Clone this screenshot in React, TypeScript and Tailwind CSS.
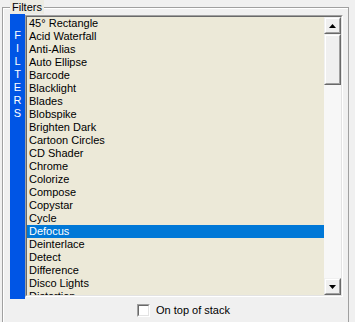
import React from 'react';

const filters = [
  '45° Rectangle',
  'Acid Waterfall',
  'Anti-Alias',
  'Auto Ellipse',
  'Barcode',
  'Blacklight',
  'Blades',
  'Blobspike',
  'Brighten Dark',
  'Cartoon Circles',
  'CD Shader',
  'Chrome',
  'Colorize',
  'Compose',
  'Copystar',
  'Cycle',
  'Defocus',
  'Deinterlace',
  'Detect',
  'Difference',
  'Disco Lights',
  'Distortion',
];

const selected = 'Defocus';

// raised 3d button like the classic windows scrollbar
function ScrollButton({ dir }: { dir: 'up' | 'down' }) {
  return (
    <div className="h-[17px] w-[17px] border-t border-l border-[#f0f0f0] border-r border-b border-r-[#696969] border-b-[#696969] bg-[#f0f0f0]">
      <div className="flex h-full w-full items-center justify-center border-t border-l border-white border-r border-b border-r-[#a0a0a0] border-b-[#a0a0a0]">
        <svg width="7" height="4" viewBox="0 0 7 4">
          {dir === 'up' ? (
            <polygon points="3.5,0 7,4 0,4" fill="#000" />
          ) : (
            <polygon points="0,0 7,0 3.5,4" fill="#000" />
          )}
        </svg>
      </div>
    </div>
  );
}

export default function App() {
  return (
    <div
      className="relative h-[322px] w-[355px] overflow-hidden bg-[#f0f0f0] text-[11px] text-black"
      style={{ fontFamily: '"Liberation Sans", Arial, sans-serif' }}
    >
      {/* group box */}
      <div className="ml-[2px] mt-[7px] h-[330px] w-[347px] border-t border-l border-r border-[#a0a0a0]">
        <div className="h-full w-full border-t border-l border-white">
          <div className="flex items-start pl-[6px] pt-[4px]">
            {/* blue side label */}
            <div className="flex h-[286px] w-[15px] flex-col items-center bg-[#0055e5] pt-[16px] text-white">
              {'FILTERS'.split('').map((c, i) => (
                <span key={i} className="block h-[13px] leading-[13px]">
                  {c}
                </span>
              ))}
            </div>

            {/* list box */}
            <div className="mt-[2px] h-[282px] w-[318px] border-t border-l border-[#a0a0a0] border-r border-b border-r-white border-b-white">
              <div className="flex h-full w-full border-t border-l border-[#696969] border-r border-b border-r-[#e3e3e3] border-b-[#e3e3e3]">
                <div className="h-full flex-1 overflow-hidden bg-[#ece9d8]">
                  {filters.map((f) => (
                    <div
                      key={f}
                      className={
                        f === selected
                          ? 'h-[13px] bg-[#0078d7] pl-[2px] leading-[13px] text-white'
                          : 'h-[13px] pl-[2px] leading-[13px]'
                      }
                    >
                      {f}
                    </div>
                  ))}
                </div>
                {/* scrollbar */}
                <div className="flex h-full w-[17px] flex-col bg-[#f7f7f7]">
                  <ScrollButton dir="up" />
                  <div className="h-[51px] w-[17px] border-t border-l border-[#f0f0f0] border-r border-b border-r-[#696969] border-b-[#696969] bg-[#f0f0f0]">
                    <div className="h-full w-full border-t border-l border-white border-r border-b border-r-[#a0a0a0] border-b-[#a0a0a0]" />
                  </div>
                  <div className="flex-1" />
                  <ScrollButton dir="down" />
                </div>
              </div>
            </div>
          </div>

          {/* checkbox */}
          <div className="ml-[133px] mt-[5px] flex items-center gap-[6px]">
            <div className="h-[13px] w-[13px] border-t border-l border-[#a0a0a0] border-r border-b border-r-white border-b-white">
              <div className="h-full w-full border-t border-l border-[#696969] border-r border-b border-r-[#e3e3e3] border-b-[#e3e3e3] bg-white" />
            </div>
            <span className="leading-[13px]">On top of stack</span>
          </div>
        </div>
      </div>

      {/* group caption over the frame */}
      <div className="absolute left-[10px] top-0 bg-[#ecebe2] px-[2px] leading-[14px]">
        Filters
      </div>
    </div>
  );
}
